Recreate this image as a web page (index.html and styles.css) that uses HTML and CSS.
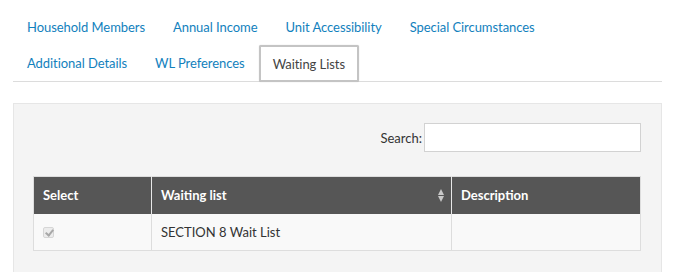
FILE: index.html
```html
<!DOCTYPE html>
<html lang="en">
<head>
    <meta charset="UTF-8">
    <title>Waiting Lists</title>
    <link rel="stylesheet" href="styles.css">
</head>
<body>
    <div class="page">
        <ul class="tabs">
            <li class="tab">Household Members</li>
            <li class="tab">Annual Income</li>
            <li class="tab">Unit Accessibility</li>
            <li class="tab">Special Circumstances</li>
            <li class="tab">Additional Details</li>
            <li class="tab">WL Preferences</li>
            <li class="tab active">Waiting Lists</li>
        </ul>

        <div class="panel">
            <div class="search-row">
                <label class="search-label" for="search">Search:</label>
                <input class="search-input" id="search" type="text">
            </div>

            <table class="list-table">
                <thead>
                    <tr>
                        <th class="col-select">Select</th>
                        <th class="col-name sortable">Waiting list <span class="sort-icon"></span></th>
                        <th class="col-desc">Description</th>
                    </tr>
                </thead>
                <tbody>
                    <tr>
                        <td><span class="check"></span></td>
                        <td>SECTION 8 Wait List</td>
                        <td></td>
                    </tr>
                </tbody>
            </table>
        </div>
    </div>
</body>
</html>
```

FILE: styles.css
```css
* {
    margin: 0;
    padding: 0;
    box-sizing: border-box;
}

body {
    font-family: Lato, 'Open Sans', sans-serif;
    font-size: 13px;
    color: #333;
    background: #fff;
}

.page {
    padding: 9px 13px 0;
}

.tabs {
    list-style: none;
    display: flex;
    flex-wrap: wrap;
    border-bottom: 1px solid #dcdcdc;
}

.tab {
    height: 36px;
    line-height: 37px;
    padding: 0 14px;
    color: #1281bd;
    letter-spacing: -0.06px;
    white-space: nowrap;
}

.tab.active {
    color: #444;
    padding: 0 12px;
    height: 37px;
    line-height: 35px;
    margin-bottom: -1px;
    border: 2px solid #c4c4c4;
    border-radius: 2px;
    box-shadow: 0 0 1px rgba(0, 0, 0, 0.25);
    background: #fff;
}

.panel {
    margin-top: 21px;
    height: 180px;
    background: #f4f4f4;
    border: 1px solid #e6e6e6;
    border-bottom: none;
    padding: 19px 20px 0 19px;
}

.search-row {
    display: flex;
    justify-content: flex-end;
    align-items: center;
    gap: 2px;
}

.search-label {
    font-size: 13px;
    color: #333;
}

.search-input {
    width: 217px;
    height: 29px;
    border: 1px solid #d2d2d2;
    background: #fff;
    outline: none;
}

.list-table {
    width: 100%;
    margin-top: 24px;
    border-collapse: collapse;
    font-size: 13px;
    border: 1px solid #dddddd;
}

.list-table th {
    background: #565656;
    color: #fff;
    font-weight: 700;
    text-align: left;
    height: 37px;
    padding: 0 9px;
    border-left: 1px solid #e8e8e8;
}

.list-table th:first-child,
.list-table td:first-child {
    border-left: none;
}

.list-table td {
    background: #f9f9f9;
    height: 37px;
    padding: 0 9px;
    border-left: 1px solid #dddddd;
    color: #333;
}

.col-select {
    width: 118px;
}

.col-name {
    width: 300px;
    position: relative;
}

.sort-icon {
    position: absolute;
    right: 6px;
    top: 12px;
    width: 7px;
    height: 13px;
}

.sort-icon::before,
.sort-icon::after {
    content: '';
    position: absolute;
    left: 0;
    border-left: 3.5px solid transparent;
    border-right: 3.5px solid transparent;
}

.sort-icon::before {
    top: 0;
    border-bottom: 6px solid #c8c8c8;
}

.sort-icon::after {
    bottom: 0;
    border-top: 6px solid #c8c8c8;
}

.check {
    display: inline-block;
    width: 11px;
    height: 11px;
    margin-top: 4px;
    border: 1px solid #d6d6d6;
    border-radius: 2px;
    background: #ececec;
    position: relative;
}

.check::after {
    content: '';
    position: absolute;
    left: 3px;
    top: 0;
    width: 3px;
    height: 6px;
    border-right: 2px solid #a8a8a8;
    border-bottom: 2px solid #a8a8a8;
    transform: rotate(40deg);
}
```
